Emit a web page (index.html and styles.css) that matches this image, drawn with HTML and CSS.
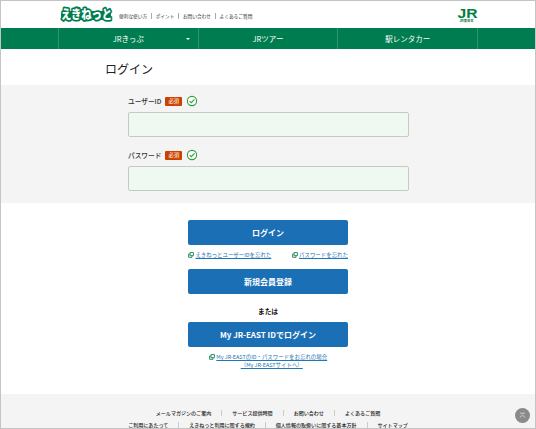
FILE: index.html
```html
<!DOCTYPE html>
<html lang="ja">
<head>
  <meta charset="UTF-8">
  <meta name="viewport" content="width=device-width, initial-scale=1.0">
  <title>ログイン</title>
  <link rel="stylesheet" href="styles.css">
</head>
<body>
  <!-- shared icons -->
  <svg class="defs" width="0" height="0">
    <symbol id="check" viewBox="0 0 12 12">
      <circle cx="6" cy="6" r="4.6" fill="#fff" stroke="#2f9e3a" stroke-width="1.1"/>
      <path d="M3.6 6.1l1.7 1.6 3.2-3.3" fill="none" stroke="#2f9e3a" stroke-width="1.1"/>
    </symbol>
    <symbol id="window" viewBox="0 0 6 6">
      <path d="M2 .6h3.4v3.1H2z" fill="#fff" stroke="#2c9160" stroke-width="1"/>
      <path d="M2 2H.6v3.3H4V3.7" fill="none" stroke="#2c9160" stroke-width="1"/>
    </symbol>
  </svg>

  <div class="page">
    <!-- Header -->
    <header class="header">
      <svg class="logo" width="56" height="24" viewBox="0 0 56 24">
        <rect x="3" y="8" width="50" height="9" rx="4" fill="#007d50"/>
        <text class="logo-text" x="3" y="16.4" textLength="51" lengthAdjust="spacingAndGlyphs">えきねっと</text>
      </svg>
      <ul class="sub-nav">
        <li>便利な使い方</li>
        <li>ポイント</li>
        <li>お問い合わせ</li>
        <li>よくあるご質問</li>
      </ul>
      <svg class="jr" width="24" height="24" viewBox="0 0 24 24">
        <text class="jr-mark" x="3.5" y="14.8" textLength="20" lengthAdjust="spacingAndGlyphs">JR</text>
        <text class="jr-name" x="5.5" y="19.3" textLength="14" lengthAdjust="spacingAndGlyphs">JR東日本</text>
      </svg>
    </header>

    <nav class="main-nav">
      <ul>
        <li>JRきっぷ<span class="caret"></span></li>
        <li>JRツアー</li>
        <li>駅レンタカー</li>
      </ul>
    </nav>

    <h1>ログイン</h1>

    <!-- Login form -->
    <section class="form">
      <div class="field">
        <label for="user">ユーザーID <span class="required">必須</span><svg class="check"><use href="#check"/></svg></label>
        <input type="text" id="user">
      </div>
      <div class="field">
        <label for="pass">パスワード <span class="required">必須</span><svg class="check"><use href="#check"/></svg></label>
        <input type="password" id="pass">
      </div>
    </section>

    <!-- Buttons -->
    <section class="actions">
      <button>ログイン</button>
      <div class="links">
        <a href="#"><svg class="window"><use href="#window"/></svg><span>えきねっとユーザーIDを忘れた</span></a>
        <a href="#"><svg class="window"><use href="#window"/></svg><span>パスワードを忘れた</span></a>
      </div>
      <button>新規会員登録</button>
      <p class="or">または</p>
      <button>My JR-EAST IDでログイン</button>
      <a class="east" href="#"><svg class="window"><use href="#window"/></svg><span>My JR-EASTのID・パスワードをお忘れの場合<br>（My JR-EASTサイトへ）</span></a>
    </section>

    <!-- Footer -->
    <footer class="footer">
      <ul>
        <li>メールマガジンのご案内</li>
        <li>サービス提供時間</li>
        <li>お問い合わせ</li>
        <li>よくあるご質問</li>
      </ul>
      <ul>
        <li>ご利用にあたって</li>
        <li>えきねっと利用に関する規約</li>
        <li>個人情報の取扱いに関する基本方針</li>
        <li>サイトマップ</li>
      </ul>
    </footer>

    <a class="page-top" href="#">
      <svg width="15" height="15" viewBox="0 0 15 15">
        <path d="M5 5.2h5M4.8 9.5l2.7-2.4 2.7 2.4" fill="none" stroke="#ddd" stroke-width=".8"/>
      </svg>
    </a>
  </div>
</body>
</html>
```
FILE: styles.css
```css
* {
  box-sizing: border-box;
}
body {
  margin: 0;
  font-family: "Noto Sans CJK JP", sans-serif;
  color: #222;
}
ul {
  list-style: none;
  margin: 0;
  padding: 0;
  display: flex;
}
.defs {
  position: absolute;
}
.page {
  position: relative;
  height: 429px;
  border: 1px solid #c4c4c4;
  overflow: hidden;
  background: #fff;
}

/* Header */
.header {
  display: flex;
  align-items: center;
  height: 27px;
  padding: 0 57px;
}
.header svg {
  overflow: visible;
}
.logo-text {
  font-size: 12px;
  font-weight: 900;
  fill: #fff;
  stroke: #007d50;
  stroke-width: 3.6px;
  stroke-linejoin: round;
  paint-order: stroke;
}
.sub-nav {
  margin: 2px 0 0 5px;
  color: #333;
  font-size: 4.7px;
  line-height: 6px;
}
.sub-nav li {
  display: flex;
  align-items: center;
}
.sub-nav li + li::before {
  content: "";
  height: 6px;
  margin: 0 4px 0 3.5px;
  border-left: 1px solid #aaa;
}
.jr {
  margin-left: auto;
}
.jr text {
  fill: #008040;
  font-family: "Liberation Sans", "Noto Sans CJK JP", sans-serif;
  font-weight: bold;
}
.jr .jr-mark {
  font-size: 13.5px;
}
.jr .jr-name {
  font-size: 3.6px;
}

/* Navigation */
.main-nav {
  height: 21px;
  padding: 0 57px;
  background: #007d50;
}
.main-nav ul {
  width: 420px;
  height: 21px;
  border-left: 1px solid #2f9470;
}
.main-nav li {
  position: relative;
  flex: 1;
  border-right: 1px solid #2f9470;
  color: #fff;
  font-size: 7.5px;
  line-height: 22px;
  text-align: center;
}
.caret {
  position: absolute;
  right: 8px;
  top: 10px;
  border: 2.5px solid transparent;
  border-top-color: #fff;
  border-bottom: 0;
}

h1 {
  height: 36px;
  margin: 0;
  padding-left: 104px;
  font-size: 12px;
  font-weight: 400;
  line-height: 39px;
}

/* Form */
.form {
  height: 118px;
  padding: 10px 127px 0;
  background: #f4f4f4;
}
.field {
  width: 281px;
  margin-bottom: 12px;
}
.field label {
  display: flex;
  align-items: center;
  height: 12px;
  margin-bottom: 5px;
  color: #333;
  font-size: 6.7px;
  font-weight: 500;
}
.required {
  width: 17px;
  height: 9px;
  margin: 0 4px 0 4px;
  border-radius: 1px;
  background: #cc4100;
  color: #fff;
  font-size: 5.4px;
  font-weight: 400;
  line-height: 9px;
  text-align: center;
}
.check {
  width: 12px;
  height: 12px;
}
.field input {
  display: block;
  width: 281px;
  height: 25px;
  border: 1px solid #c2ccc4;
  border-radius: 2px;
  background: #f0f8f2;
}

/* Buttons */
.actions {
  width: 160px;
  height: 191px;
  margin: 0 0 0 187px;
  padding-top: 17px;
}
.actions button {
  display: block;
  width: 160px;
  height: 25px;
  padding: 0;
  border: 0;
  border-radius: 2px;
  background: #1b70b5;
  color: #fff;
  font-family: inherit;
  font-size: 8px;
  font-weight: 700;
  line-height: 24px;
}
.actions a {
  display: flex;
  color: #2475b8;
  font-size: 5.45px;
  line-height: 8px;
}
.window {
  width: 6px;
  height: 6px;
  margin: 1px 1.5px 0 0;
}
.links {
  display: flex;
  justify-content: space-between;
  height: 24px;
  padding-top: 6px;
}
.or {
  height: 28px;
  margin: 0;
  color: #111;
  font-size: 6.7px;
  font-weight: 700;
  line-height: 35px;
  text-align: center;
}
.actions .east {
  justify-content: center;
  margin-top: 6px;
  text-align: center;
}

/* Footer */
.footer {
  height: 60px;
  padding-top: 12.5px;
  background: #f4f4f4;
  font-size: 5.05px;
  font-weight: 500;
}
.footer ul {
  justify-content: center;
  margin-bottom: 0.5px;
  line-height: 12px;
}
.footer li {
  display: flex;
  align-items: center;
}
.footer li + li::before {
  content: "";
  height: 6px;
  margin: 0 10px;
  border-left: 1px solid #ccc;
}

.page-top {
  position: absolute;
  right: 5px;
  bottom: 5px;
  width: 15px;
  height: 15px;
  border-radius: 50%;
  background: #8a8a8a;
}
.page-top svg {
  display: block;
}
```
